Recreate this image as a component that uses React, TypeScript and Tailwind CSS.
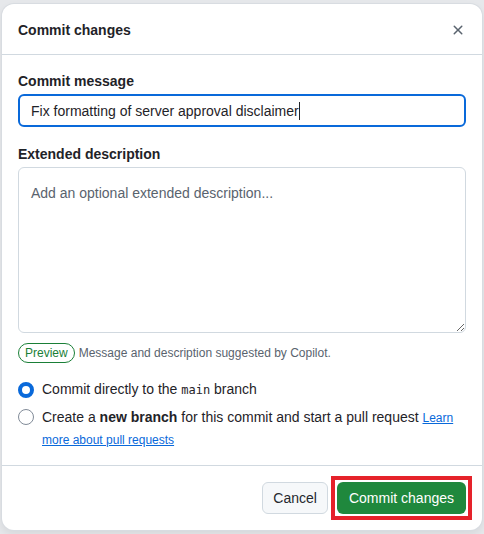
export default function App() {
  return (
    <div
      className="min-h-[534px] w-[484px] bg-[#e6e8eb] pt-[4px] pl-[2px]"
      style={{ fontFamily: '"Liberation Sans", Arial, sans-serif' }}
    >
      <div className="w-[480px] h-[526px] rounded-xl bg-white shadow-[0_0_0_1px_#d8dce1,0_4px_10px_rgba(0,0,0,0.08)] flex flex-col text-[#1f2328]">
        <div className="flex items-center justify-between h-[51px] px-4 pt-[1px] border-b border-[#d1d9e0]">
          <div className="text-[14px] font-semibold leading-5">Commit changes</div>
          <button className="w-8 h-8 -mr-2 flex items-center justify-center text-[#59636e]">
            <svg width="16" height="16" viewBox="0 0 16 16" fill="currentColor">
              <path d="M3.72 3.72a.75.75 0 0 1 1.06 0L8 6.94l3.22-3.22a.749.749 0 0 1 1.275.326.749.749 0 0 1-.215.734L9.06 8l3.22 3.22a.749.749 0 0 1-.326 1.275.749.749 0 0 1-.734-.215L8 9.06l-3.22 3.22a.751.751 0 0 1-1.042-.018.751.751 0 0 1-.018-1.042L6.94 8 3.72 4.78a.75.75 0 0 1 0-1.06Z" />
            </svg>
          </button>
        </div>
        <div className="flex-1 px-4 pt-4 flex flex-col">
          <div className="text-[14px] font-semibold leading-5">Commit message</div>
          <div className="mt-[3px] h-[33px] rounded-md border-2 border-[#0969da] flex items-center px-[11px] pt-[1px] text-[14px]">
            <span>Fix formatting of server approval disclaimer</span>
            <span className="inline-block w-px h-[18px] bg-[#1f2328]" />
          </div>
          <div className="mt-[17px] text-[14px] font-semibold leading-5">Extended description</div>
          <textarea
            className="mt-[3px] h-[166px] w-full rounded-md border border-[#d1d9e0] px-3 pt-[15px] pb-2 text-[14px] leading-5 placeholder:text-[#59636e] resize-y"
            placeholder="Add an optional extended description..."
            style={{ fontFamily: '"Liberation Sans", Arial, sans-serif' }}
          />
          <div className="mt-[10px] flex items-center gap-1">
            <span className="rounded-full border border-[#1a7f37] text-[#1a7f37] text-[12px] leading-4 px-[6px] py-px">
              Preview
            </span>
            <span className="text-[12px] text-[#59636e]">Message and description suggested by Copilot.</span>
          </div>
          <div className="mt-[16px] flex items-center gap-2 text-[14px] leading-5">
            <span className="w-4 h-4 rounded-full border-[4px] border-[#0969da] bg-white" />
            <span>
              Commit directly to the{' '}
              <span className="text-[12px]" style={{ fontFamily: '"DejaVu Sans Mono", monospace' }}>
                main
              </span>{' '}
              branch
            </span>
          </div>
          <div className="mt-[7px] flex items-start gap-2 text-[14px] leading-5">
            <span className="mt-[2px] w-4 h-4 shrink-0 rounded-full border border-[#818b98] bg-white" />
            <span className="leading-[21px]">
              Create a <b className="font-semibold">new branch</b> for this commit and start a pull request{' '}
              <a className="text-[12px] leading-[21px] text-[#0969da] underline">Learn more about pull requests</a>
            </span>
          </div>
        </div>
        <div className="border-t border-[#d1d9e0] px-4 pt-4 pb-4 flex justify-end gap-[9px]">
          <button className="h-8 px-[10px] rounded-md border border-[#d1d9e0] bg-[#f6f8fa] text-[14px] font-medium text-[#25292e]">
            Cancel
          </button>
          <div className="relative">
            <span className="absolute -inset-[6px] border-[4px] border-[#e5222a]" />
            <button className="relative h-8 px-3 rounded-md bg-[#1f883d] text-white text-[14px] font-medium">
              Commit changes
            </button>
          </div>
        </div>
      </div>
    </div>
  );
}
